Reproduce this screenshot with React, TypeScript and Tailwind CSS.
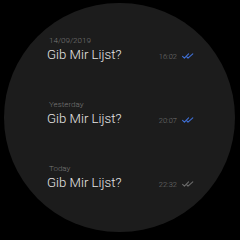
import React from 'react';

type Msg = { label: string; text: string; time: string; read: boolean };

const messages: Msg[] = [
    { label: '14/09/2019', text: 'Gib Mir Lijst?', time: '16:02', read: true },
    { label: 'Yesterday', text: 'Gib Mir Lijst?', time: '20:07', read: true },
    { label: 'Today', text: 'Gib Mir Lijst?', time: '22:32', read: false },
];

const DoubleCheck: React.FC<{ color: string }> = ({ color }) => (
    <svg width="12" height="6" viewBox="0 0 12 6" fill="none">
        <path d="M0.6 3.4 L2.4 5.2 L6.6 0.8" stroke={color} strokeWidth="1.1" strokeLinecap="round" strokeLinejoin="round" />
        <path d="M4.6 3.6 L6 5.2 L10.8 0.8" stroke={color} strokeWidth="1.1" strokeLinecap="round" strokeLinejoin="round" />
    </svg>
);

const App: React.FC = () => {
    return (
        <div className="w-[240px] h-[240px] bg-black overflow-hidden font-['Roboto','Liberation_Sans',Arial,sans-serif]">
            <div className="ml-[4px] mt-[3px] w-[231px] h-[229px] rounded-full bg-[#1c1c1c] pt-[33px] pl-[43px] pr-[41px]">
                <div className="flex flex-col gap-[38px]">
                    {messages.map((m, i) => (
                        <div key={i} className="flex flex-col gap-[2px]">
                            <div className="text-[8px] leading-[9px] font-light text-[#7a7a7a] pl-[2px]">{m.label}</div>
                            <div className="flex items-baseline">
                                <span className="text-[13.2px] leading-[15px] font-light text-[#e6e6e6]">{m.text}</span>
                                <span className="ml-auto text-[7.5px] leading-[9px] font-light text-[#747474]">{m.time}</span>
                                <span className="ml-[5px] self-center mt-[2px]">
                                    <DoubleCheck color={m.read ? '#3f6fd4' : '#6a6a6a'} />
                                </span>
                            </div>
                        </div>
                    ))}
                </div>
            </div>
        </div>
    );
};

export default App;
